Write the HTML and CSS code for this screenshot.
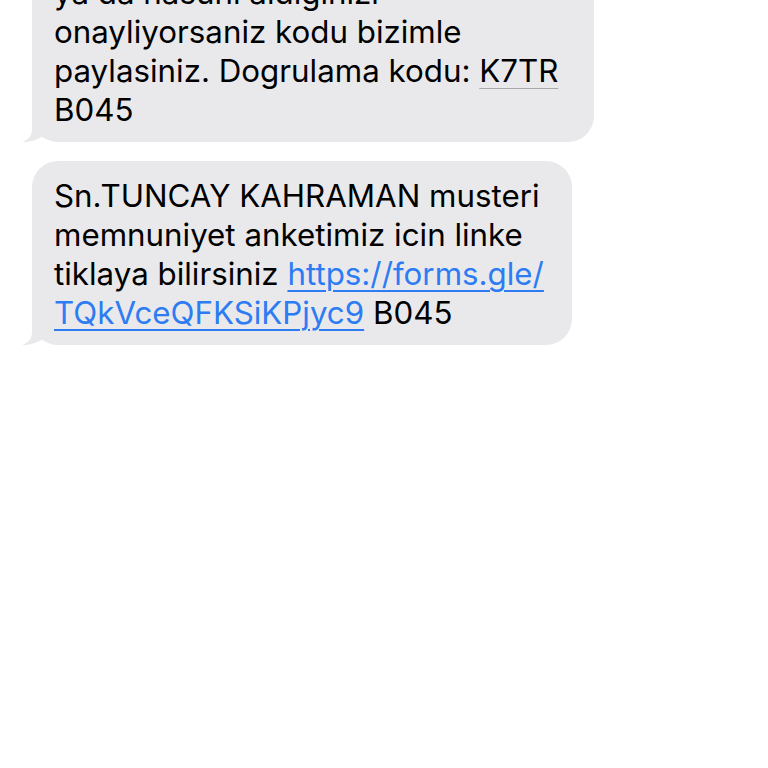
FILE: index.html
```html
<!DOCTYPE html>
<html>
<head>
<meta charset="utf-8">
<link rel="stylesheet" href="styles.css">
</head>
<body>
<div class="thread">
  <div class="bubble b1">
    <svg class="tail" width="40" height="30" viewBox="0 0 40 30"><path d="M10 0 L10 17 C10 24 6 28 0 30 C8 30.5 15 28 21 24 C24 27 28 29 36 30 L40 30 L40 0 Z"/></svg>
    <span class="line">ya da hasuni aldiginizi</span>
    <span class="line">onayliyorsaniz kodu bizimle</span>
    <span class="line">paylasiniz. Dogrulama kodu: <span class="code">K7TR</span></span>
    <span class="line">B045</span>
  </div>
  <div class="bubble b2">
    <svg class="tail" width="40" height="30" viewBox="0 0 40 30"><path d="M10 0 L10 17 C10 24 6 28 0 30 C8 30.5 15 28 21 24 C24 27 28 29 36 30 L40 30 L40 0 Z"/></svg>
    <span class="line">Sn.TUNCAY KAHRAMAN musteri</span>
    <span class="line">memnuniyet anketimiz icin linke</span>
    <span class="line">tiklaya bilirsiniz <span class="link">https://forms.gle/</span></span>
    <span class="line"><span class="link">TQkVceQFKSiKPjyc9</span> B045</span>
  </div>
</div>
</body>
</html>
```
FILE: styles.css
```css
html, body {
  margin: 0;
  padding: 0;
  background: #ffffff;
}
body {
  width: 768px;
  height: 768px;
  overflow: hidden;
  font-family: Inter, "Liberation Sans", sans-serif;
}
.thread {
  display: flex;
  flex-direction: column;
  align-items: flex-start;
  gap: 19px;
  padding-left: 32px;
  margin-top: -42px;
}
.bubble {
  position: relative;
  display: flex;
  flex-direction: column;
  background: #e9e9eb;
  border-radius: 26px;
  padding: 16px 0 12px 22px;
  box-sizing: border-box;
  font-size: 31.3px;
  line-height: 39px;
  color: #000;
  white-space: nowrap;
}
.b1 { width: 562px; }
.b2 { width: 540px; }
.line {
  display: block;
  position: relative;
}
.code {
  text-decoration: underline;
  text-decoration-color: #a8a8ac;
  text-decoration-thickness: 1px;
  text-underline-offset: 6px;
}
.link {
  color: #2d7cf3;
  text-decoration: underline;
  text-decoration-thickness: 1.5px;
  text-underline-offset: 5px;
}
.tail {
  position: absolute;
  left: -10px;
  bottom: 0;
  fill: #e9e9eb;
}
```
